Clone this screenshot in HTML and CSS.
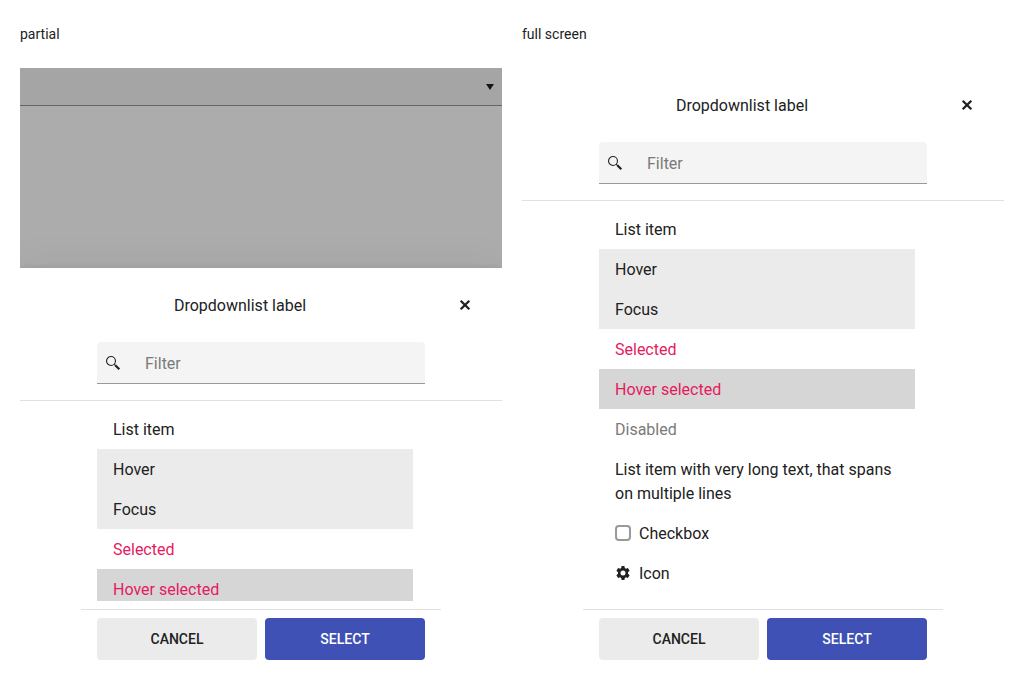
FILE: index.html
```
<!DOCTYPE html>
<html lang="en">
<head>
<meta charset="utf-8">
<title>Adaptive dropdown list</title>
<link rel="stylesheet" href="styles.css">
</head>
<body>
<svg class="sprite" aria-hidden="true">
  <symbol id="search" viewBox="0 0 16 16"><circle cx="6" cy="6" r="4.45" fill="none" stroke="currentColor" stroke-width="1.1"/><path d="M9.2 9.2l1.4 1.4" stroke="currentColor" stroke-width="1.1"/><path d="M10.3 10.3l4 4" stroke="currentColor" stroke-width="2.2"/></symbol>
  <symbol id="close" viewBox="0 0 16 16"><path d="M3.7 3.7l8.6 8.6M12.3 3.7l-8.6 8.6" stroke="currentColor" stroke-width="2.3"/></symbol>
  <symbol id="gear" viewBox="0 0 16 16"><path fill="currentColor" fill-rule="evenodd" d="M6.600 1h2.800l.4 2 1.100.7 2-.7 1.700 2.800-1.600 1.400v1.600l1.600 1.400-1.700 2.800-2-.7-1.100.7-.4 2H6.600l-.4-2-1.100-.7-2 .7-1.700-2.800 1.600-1.400V7.200L1.400 5.800 3.100 3l2 .7L6.200 3zM8 5.500a2.500 2.500 0 1 0 0 5 2.500 2.500 0 0 0 0-5z"/></symbol>
</svg>
<main class="page">
  <section class="demo">
    <h2 class="demo-title">partial</h2>
    <div class="screen">
      <div class="backdrop">
        <div class="picker"><svg class="caret" viewBox="0 0 8 6"><path d="M0 0h8L4 6z" fill="currentColor"/></svg></div>
      </div>
      <div class="sheet sheet-partial">
        <header class="sheet-header">
          <div class="title-row">
            <div class="sheet-title">Dropdownlist label</div>
            <button class="close" aria-label="Close"><svg class="icon"><use href="#close"/></svg></button>
          </div>
          <label class="filter"><svg class="icon filter-icon"><use href="#search"/></svg><input class="filter-input" placeholder="Filter"></label>
        </header>
        <ul class="list">
          <li class="item">List item</li>
          <li class="item hover">Hover</li>
          <li class="item hover">Focus</li>
          <li class="item selected">Selected</li>
          <li class="item selected hover-selected">Hover selected</li>
        </ul>
        <footer class="actions">
          <button class="button">CANCEL</button>
          <button class="button primary">SELECT</button>
        </footer>
      </div>
    </div>
  </section>
  <section class="demo">
    <h2 class="demo-title">full screen</h2>
    <div class="screen">
      <div class="sheet">
        <header class="sheet-header">
          <div class="title-row">
            <div class="sheet-title">Dropdownlist label</div>
            <button class="close" aria-label="Close"><svg class="icon"><use href="#close"/></svg></button>
          </div>
          <label class="filter"><svg class="icon filter-icon"><use href="#search"/></svg><input class="filter-input" placeholder="Filter"></label>
        </header>
        <ul class="list">
          <li class="item">List item</li>
          <li class="item hover">Hover</li>
          <li class="item hover">Focus</li>
          <li class="item selected">Selected</li>
          <li class="item selected hover-selected">Hover selected</li>
          <li class="item disabled">Disabled</li>
          <li class="item">List item with very long text, that spans on multiple lines</li>
          <li class="item"><span class="checkbox"></span>Checkbox</li>
          <li class="item"><svg class="icon"><use href="#gear"/></svg>Icon</li>
        </ul>
        <footer class="actions">
          <button class="button">CANCEL</button>
          <button class="button primary">SELECT</button>
        </footer>
      </div>
    </div>
  </section>
</main>
</body>
</html>
```
FILE: styles.css
```
* { box-sizing: border-box; }
body {
  margin: 0;
  background: #fff;
  color: #212121;
  font: 14px/28px Roboto, sans-serif;
}
button, input { font: inherit; color: inherit; border: 0; padding: 0; }
.sprite { display: none; }
.icon { display: block; flex: none; width: 16px; height: 16px; }
.page {
  display: grid;
  grid-template-columns: 482px 482px;
  gap: 20px;
  padding: 20px;
}
.demo-title { margin: 0 0 20px; font: inherit; }
.screen {
  display: flex;
  flex-direction: column;
  height: 600px;
  overflow: hidden;
}
.backdrop { height: 200px; flex: none; background: #acacac; }
.picker {
  display: flex;
  align-items: center;
  justify-content: flex-end;
  height: 38px;
  padding-right: 8px;
  background: #a5a5a5;
  border-bottom: 1px solid #666;
}
.caret { width: 8px; height: 6px; color: #161616; }
.sheet {
  display: flex;
  flex-direction: column;
  flex: 1;
  min-height: 0;
  background: #fff;
}
.sheet-partial {
  box-shadow: 0 11px 15px -7px rgba(0, 0, 0, .04), 0 9px 46px 8px rgba(0, 0, 0, .05), 0 0 6px rgba(0, 0, 0, .1);
}
.sheet-header {
  display: flex;
  flex-direction: column;
  align-items: center;
  gap: 16px;
  padding: 16px;
  border-bottom: 1px solid #e0e0e0;
}
.title-row { display: flex; align-items: center; align-self: stretch; }
.sheet-title { flex: 1; padding-top: 2px; text-align: center; font-size: 16px; line-height: 24px; }
.close {
  display: grid;
  place-items: center;
  width: 42px;
  height: 42px;
  background: none;
}
.filter {
  display: flex;
  align-items: center;
  width: 328px;
  height: 42px;
  padding-left: 8px;
  background: #f4f4f4;
  border-bottom: 1px solid #999;
  border-radius: 4px 4px 0 0;
}
.filter-input {
  flex: 1;
  min-width: 0;
  height: 26px;
  margin-left: 24px;
  padding-top: 2px;
  background: none;
  font-size: 16px;
  line-height: 24px;
}
.filter-input::placeholder { color: #7a7a7a; }
.list {
  flex: 1;
  min-height: 0;
  width: 316px;
  margin: 8px 0 8px 77px;
  padding: 0;
  overflow: hidden;
  list-style: none;
  font-size: 16px;
  line-height: 24px;
}
.item { display: flex; align-items: center; gap: 8px; padding: 9px 16px 7px; }
.item > .icon, .checkbox { margin-bottom: 2px; }
.hover { background: #ebebeb; }
.selected { color: #e51a5f; }
.hover-selected { background: #d6d6d6; }
.disabled { color: #7a7a7a; }
.checkbox {
  width: 16px;
  height: 16px;
  border: 2px solid #999;
  border-radius: 4px;
}
.actions {
  display: flex;
  gap: 8px;
  width: 360px;
  margin-left: 61px;
  padding: 8px 16px;
  border-top: 1px solid #e0e0e0;
}
.button {
  flex: 1;
  height: 42px;
  border-radius: 4px;
  background: #ebebeb;
  font-weight: 500;
}
.primary { background: #3f51b5; color: #fff; }
```
